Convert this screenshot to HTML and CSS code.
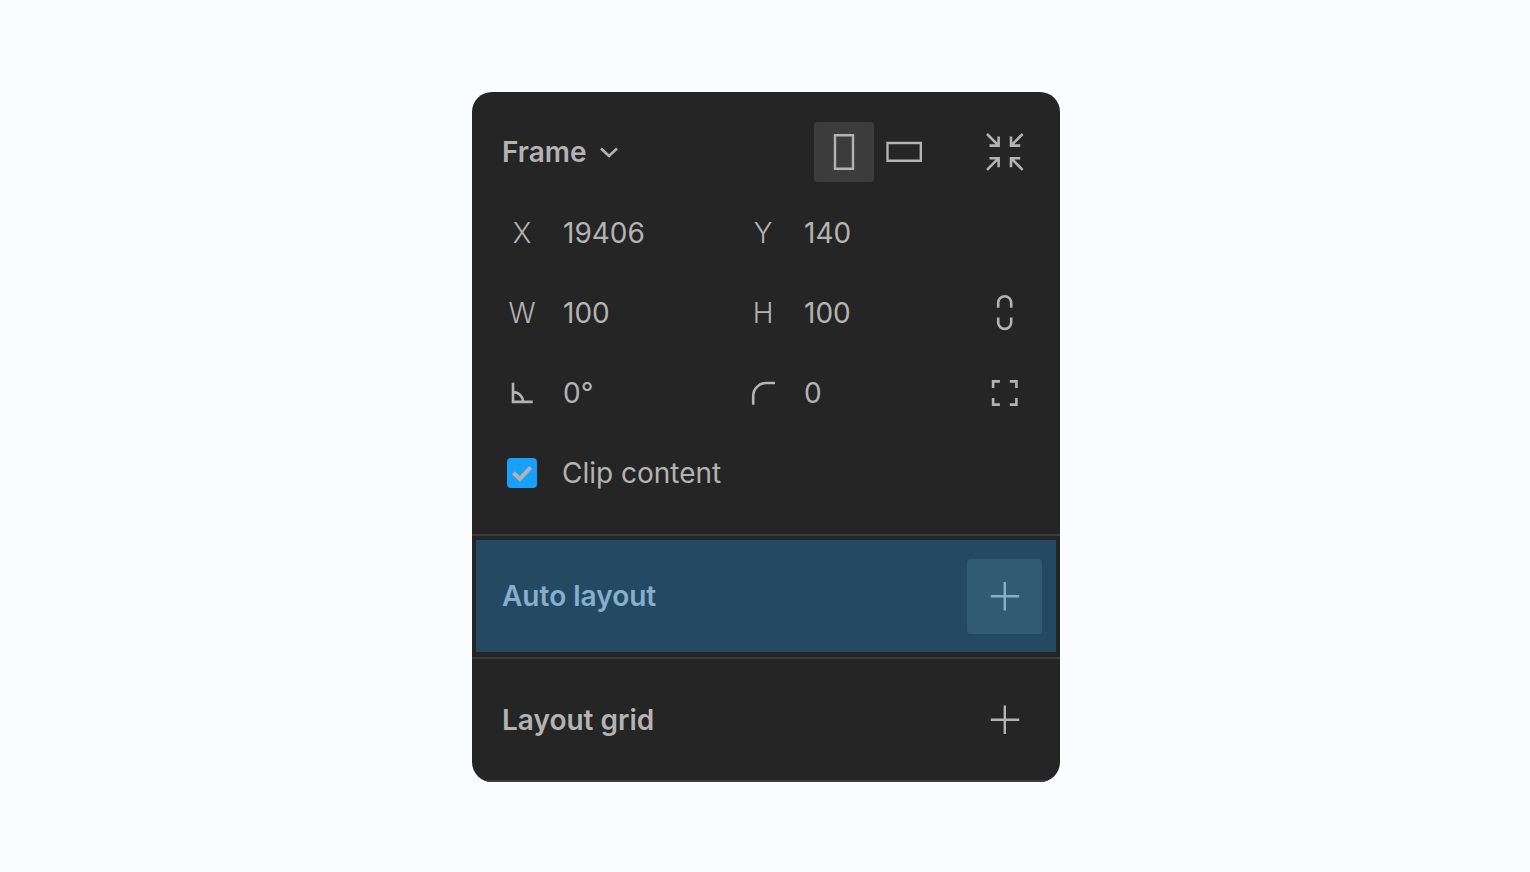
FILE: index.html
```html
<!DOCTYPE html>
<html lang="en">
<head>
<meta charset="utf-8">
<meta name="viewport" content="width=device-width, initial-scale=1">
<title>Frame properties</title>
<link rel="stylesheet" href="styles.css">
</head>
<body>
<main class="panel">
  <section class="properties">
    <header class="header">
      <div class="picker">
        <select class="picker-select" aria-label="Layer type"><option>Frame</option></select>
        <svg class="picker-chevron" viewBox="0 0 20 14" aria-hidden="true"><path d="M2 3.5 10 11 18 3.5"/></svg>
      </div>
      <div class="orientation">
        <button class="tool is-active" type="button" aria-label="Portrait" aria-pressed="true">
          <svg class="icon" viewBox="0 0 40 40"><path d="M11 3.2H29V36.8H11Z"/></svg>
        </button>
        <button class="tool" type="button" aria-label="Landscape" aria-pressed="false">
          <svg class="icon" viewBox="0 0 40 40"><path d="M3.5 11H36.8V28.8H3.5Z"/></svg>
        </button>
      </div>
      <button class="action" type="button" aria-label="Resize to fit">
        <svg class="icon" viewBox="0 0 40 40"><path d="M2 2 13.6 13.6M13.6 4.5V13.6H4.5M37.6 2 26 13.6M26 4.5V13.6H35.2M2 37.8 13.6 26.2M13.6 35.3V26.2H4.5M37.6 37.8 26 26.2M26 35.3V26.2H35.2"/></svg>
      </button>
    </header>

    <div class="row">
      <label class="field"><span class="field-label">X</span><input class="field-input" type="text" value="19406"></label>
      <label class="field"><span class="field-label">Y</span><input class="field-input" type="text" value="140"></label>
    </div>
    <div class="row">
      <label class="field"><span class="field-label">W</span><input class="field-input" type="text" value="100"></label>
      <label class="field"><span class="field-label">H</span><input class="field-input" type="text" value="100"></label>
      <button class="action" type="button" aria-label="Constrain proportions">
        <svg class="icon" viewBox="0 0 40 40"><path d="M13.2 14.8V9.8a6.5 6.5 0 0 1 13 0V14.8M13.2 24.4V29.4a6.5 6.5 0 0 0 13 0V24.4"/></svg>
      </button>
    </div>
    <div class="row">
      <label class="field">
        <svg class="icon" viewBox="0 0 40 40" role="img" aria-label="Rotation"><path d="M11 9.7V28.9H30.7M11 19a10 10 0 0 1 10 9.9"/></svg>
        <input class="field-input" type="text" value="0°">
      </label>
      <label class="field">
        <svg class="icon" viewBox="0 0 40 40" role="img" aria-label="Corner radius"><path d="M10.2 31.7V23a13 13 0 0 1 13-13H32"/></svg>
        <input class="field-input" type="text" value="0">
      </label>
      <button class="action" type="button" aria-label="Independent corners">
        <svg class="icon" viewBox="0 0 40 40"><path d="M8.1 15V8.4H14.9M24.8 8.4H31.4V15M31.4 25V31.6H24.8M14.9 31.6H8.1V25"/></svg>
      </button>
    </div>
    <label class="clip">
      <span class="check">
        <input class="check-input" type="checkbox" checked>
        <svg class="check-mark" viewBox="0 0 30 30" aria-hidden="true"><path d="M6.3 14.8 12.9 20.9 23.7 9.4"/></svg>
      </span>
      <span>Clip content</span>
    </label>
  </section>

  <section class="group group-selected">
    <div class="group-body">
      <h2 class="title">Auto layout</h2>
      <button class="add" type="button" aria-label="Add auto layout">
        <svg class="icon icon-plus" viewBox="0 0 40 40"><path d="M19.8 6V34.4M5.8 20.2H34.2"/></svg>
      </button>
    </div>
  </section>

  <section class="group">
    <div class="group-body">
      <h2 class="title">Layout grid</h2>
      <button class="add" type="button" aria-label="Add layout grid">
        <svg class="icon icon-plus" viewBox="0 0 40 40"><path d="M19.8 5.6V34M5.8 19.8H34.2"/></svg>
      </button>
    </div>
  </section>
</main>
</body>
</html>
```

FILE: styles.css
```css
* {
  box-sizing: border-box;
}

body {
  display: flex;
  align-items: center;
  justify-content: center;
  min-height: 100vh;
  margin: 0;
  padding: 2px 0 0 2px;
  background: #fafcff;
  color: #b3b3b3;
  font: 430 28px/36px Inter, "Liberation Sans", sans-serif;
}

button,
input,
select {
  margin: 0;
  padding: 0;
  border: 0;
  border-radius: 0;
  background: none;
  color: inherit;
  font: inherit;
}

.panel {
  width: 100%;
  max-width: 588px;
  overflow: hidden;
  border-radius: 20px;
  background: #252525;
}

.properties {
  padding: 20px 34px 21px 30px;
  border-bottom: 2px solid #3c3c3c;
}

.header {
  display: flex;
  align-items: center;
  height: 80px;
  margin-bottom: 1px;
}

.picker {
  display: grid;
  align-items: center;
  justify-items: end;
}

.picker-select {
  grid-area: 1 / 1;
  padding-right: 32px;
  appearance: none;
  font-weight: 620;
}

.picker-chevron {
  grid-area: 1 / 1;
  width: 20px;
  height: 14px;
  pointer-events: none;
}

.orientation {
  display: flex;
  margin-right: 50px;
  margin-left: auto;
}

.tool {
  display: grid;
  place-items: center;
  width: 60px;
  height: 60px;
  border-radius: 4px;
}

.tool.is-active {
  background: #3c3c3c;
}

.action {
  display: grid;
  place-items: center;
  width: 42px;
  height: 60px;
}

.row {
  display: grid;
  grid-template-columns: 1fr 1fr 42px;
  align-items: center;
  height: 80px;
}

.field {
  display: grid;
  grid-template-columns: 40px 1fr;
  column-gap: 21px;
  align-items: center;
}

.field-label {
  font-weight: 350;
  text-align: center;
}

.field-input {
  width: 100%;
  min-width: 0;
}

.clip {
  display: grid;
  grid-template-columns: 40px 1fr;
  column-gap: 20px;
  align-items: center;
  height: 80px;
}

.check {
  display: grid;
  place-items: center;
}

.check-input {
  grid-area: 1 / 1;
  width: 30px;
  height: 30px;
  appearance: none;
  border-radius: 4px;
  background: #18a0fb;
}

.check-mark {
  grid-area: 1 / 1;
  width: 30px;
  height: 30px;
  pointer-events: none;
  stroke-width: 4;
}

svg {
  display: block;
  fill: none;
  stroke: currentColor;
  stroke-width: 2.6;
}

.icon {
  width: 40px;
  height: 40px;
}

.tool .icon,
.icon-plus {
  stroke-width: 2.4;
}

.group {
  border-bottom: 2px solid #3c3c3c;
}

.group-body {
  display: flex;
  align-items: center;
  justify-content: space-between;
  height: 121px;
  padding: 0 18px 0 30px;
}

.group-selected {
  padding: 4px 4px 5px;
  color: #87afcb;
}

.group-selected .group-body {
  height: 112px;
  padding: 0 14px 0 26px;
  background: #234a62;
}

.title {
  margin: 0;
  font-size: inherit;
  font-weight: 620;
}

.add {
  display: grid;
  place-items: center;
  width: 75px;
  height: 75px;
  border-radius: 4px;
}

.group-selected .add {
  background: #335a75;
}
```
